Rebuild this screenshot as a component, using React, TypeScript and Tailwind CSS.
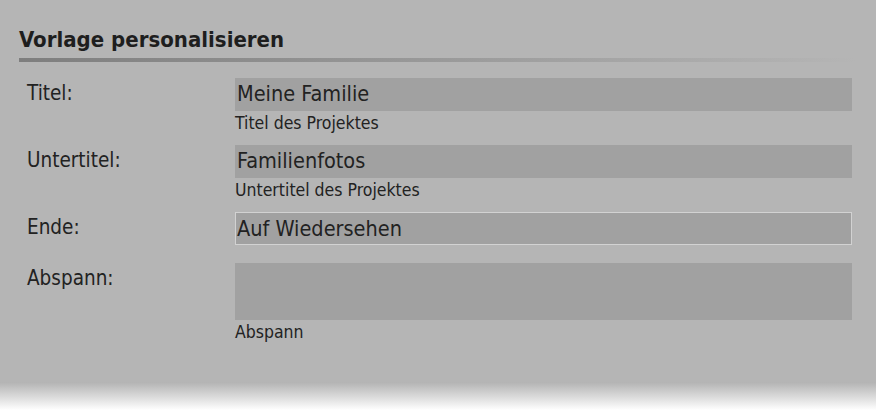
import React from "react";

const rows = [
  { label: "Titel:", value: "Meine Familie", hint: "Titel des Projektes" },
  { label: "Untertitel:", value: "Familienfotos", hint: "Untertitel des Projektes" },
  { label: "Ende:", value: "Auf Wiedersehen", focused: true },
  { label: "Abspann:", value: "", hint: "Abspann", tall: true },
];

export default function App() {
  return (
    <div
      className="w-[876px] h-[410px] flex flex-col bg-[#b5b5b5] text-[#222]"
      style={{ fontFamily: '"DejaVu Sans Condensed", "Noto Sans", sans-serif' }}
    >
      <div className="flex-1 pl-[19px] pt-[27px]">
        <h1 className="text-[22px] leading-[26px] font-bold text-[#1e1e1e]">
          Vorlage personalisieren
        </h1>
        <div className="mt-[5px] h-[4px] w-[838px] bg-gradient-to-r from-[#7e7e7e] to-transparent" />

        <div className="mt-[16px] flex flex-col pr-[24px]">
          {rows.map((r) => (
            <div key={r.label} className={`flex ${r.hint ? "mb-[12px]" : "mb-[18px]"} last:mb-0`}>
              <div className="w-[216px] pl-[8px] pt-[3px] text-[20.5px] leading-[24px]">
                {r.label}
              </div>
              <div className="flex-1 flex flex-col">
                <div
                  className={`${r.tall ? "h-[57px]" : "h-[33px]"} ${
                    r.focused ? "border border-[#d2d2d2] pl-[1px]" : "pl-[2px]"
                  } bg-[#a1a1a1] text-[21.5px] leading-[32px]`}
                >
                  {r.value}
                </div>
                {r.hint && (
                  <div className="pt-[2px] text-[17.5px] leading-[20px]">{r.hint}</div>
                )}
              </div>
            </div>
          ))}
        </div>
      </div>
      <div className="h-[28px] bg-gradient-to-b from-[#b3b3b3] to-white" />
    </div>
  );
}
